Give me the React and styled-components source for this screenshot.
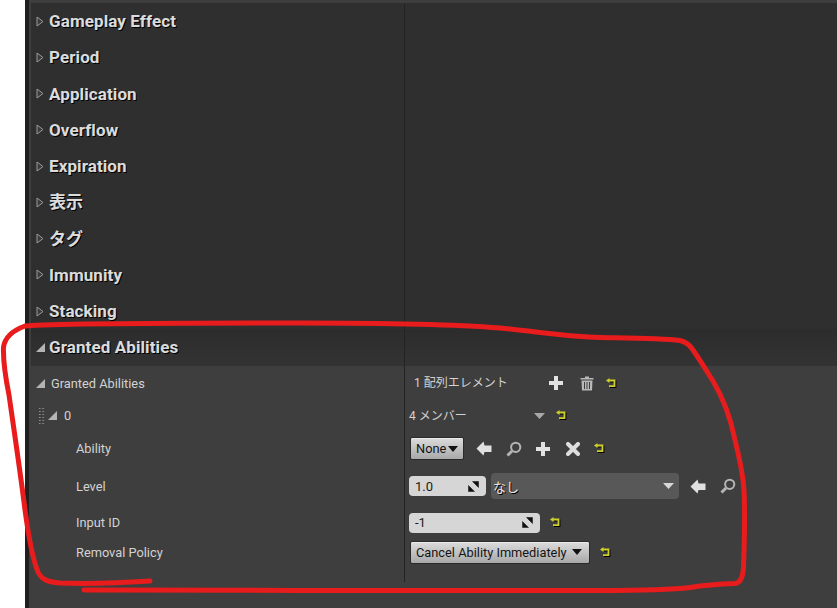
import React from 'react';
import styled, { createGlobalStyle } from 'styled-components';

const Global = createGlobalStyle`
  html, body {
    margin: 0;
    background: #fff;
  }
  body {
    font-family: Roboto, "Noto Sans CJK JP", sans-serif;
  }
`;

const Page = styled.div`
  position: relative;
  width: 837px;
  height: 608px;
  overflow: hidden;
  background: #fff;
  padding-left: 25px;
  box-sizing: border-box;
`;

const Frame = styled.div`
  width: 812px;
  height: 608px;
  box-sizing: border-box;
  border-left: 4px solid #1f1f1f;
  padding: 3px 0 26px 2px;
  background: #3e3e3e;
`;

const Row = styled.div`
  display: grid;
  grid-template-columns: 374px 1fr;
  height: ${(p) => p.$height}px;
  background: ${(p) => p.$bg || 'transparent'};
`;

const NameCell = styled.div`
  display: flex;
  align-items: center;
  padding-left: ${(p) => p.$indent || 5}px;
  border-right: 1px solid #232323;
  min-width: 0;
`;

const ValueCell = styled.div`
  display: flex;
  align-items: center;
  padding-left: ${(p) => p.$indent || 4}px;
`;

const CategoryTitle = styled.span`
  font-size: 17px;
  line-height: 20px;
  height: 20px;
  font-weight: 700;
  letter-spacing: 0.1px;
  color: #dcdcdc;
  text-shadow: 1px 1px 0 #000;
  margin-left: ${(p) => p.$gap || 5}px;
  white-space: nowrap;
`;

const Label = styled.span`
  font-size: 12.8px;
  color: #d2d2d2;
  margin-left: ${(p) => p.$gap || 0}px;
  white-space: nowrap;
`;

const ValueText = styled.span`
  font-size: 12px;
  line-height: 16px;
  height: 16px;
  color: #d2d2d2;
  white-space: nowrap;
`;

const Slot = styled.span`
  display: inline-flex;
  align-items: center;
  margin-left: ${(p) => p.$gap || 0}px;
`;

const Grip = styled.span`
  display: inline-block;
  width: 7px;
  height: 17px;
  margin-right: 3px;
  background-image: radial-gradient(circle, #8a8a8a 0.8px, transparent 1px);
  background-size: 3.5px 3px;
`;

const ComboButton = styled.div`
  display: flex;
  align-items: center;
  justify-content: space-between;
  box-sizing: border-box;
  width: ${(p) => p.$width}px;
  height: 23px;
  margin-left: 1px;
  padding: 0 ${(p) => p.$padRight}px 0 5px;
  border-radius: 2px;
  border: 1px solid #2a2a2a;
  background: linear-gradient(#dcdcdc, #a8a8a8);
  box-shadow: inset 0 1px 0 #ececec;
  font-size: 12.8px;
  color: #141414;
  white-space: nowrap;
`;

const NumberBox = styled.div`
  display: flex;
  align-items: center;
  justify-content: space-between;
  box-sizing: border-box;
  width: ${(p) => p.$width}px;
  height: 20px;
  padding: 0 7px 0 6px;
  border-radius: 4px;
  background: #d6d6d6;
  font-size: 13px;
  color: #1a1a1a;
`;

const AssetCombo = styled.div`
  display: flex;
  align-items: center;
  justify-content: space-between;
  box-sizing: border-box;
  width: 188px;
  height: 26px;
  margin-left: 5px;
  padding: 0 5px 0 2px;
  border-radius: 4px;
  background: #585858;
  font-size: 13px;
  color: #e8e8e8;
  text-shadow: 1px 1px 0 #000;
`;

const Annotation = styled.svg`
  position: absolute;
  left: 0;
  top: 0;
  pointer-events: none;
`;

const Collapsed = () => (
  <svg width="8" height="11" viewBox="0 0 8 11">
    <path d="M1 1 L7 5.5 L1 10 Z" fill="#3a3a3a" stroke="#9a9a9a" strokeWidth="1" />
  </svg>
);

const Expanded = () => (
  <svg width="9" height="9" viewBox="0 0 9 9">
    <path d="M9 0 V9 H0 Z" fill="#b4b4b4" />
  </svg>
);

const Plus = ({ color = '#e2e2e2' }) => (
  <svg width="14" height="14" viewBox="0 0 14 14">
    <path d="M5 0 H9 V5 H14 V9 H9 V14 H5 V9 H0 V5 H5 Z" fill={color} />
  </svg>
);

const Trash = () => (
  <svg width="14" height="15" viewBox="0 0 14 15">
    <path d="M0.5 2 H13.5 V3.5 H0.5 Z M5 0.5 H9 V2 H5 Z" fill="#b8b8b8" />
    <path d="M1.5 4.5 H12.5 L12 14.5 H2 Z" fill="#b8b8b8" />
    <path d="M4.5 6 V13 M7 6 V13 M9.5 6 V13" stroke="#3e3e3e" strokeWidth="1" />
  </svg>
);

const Reset = () => (
  <svg width="11" height="11" viewBox="0 0 11 11">
    <path d="M2.5 2.5 H8.5 V8.2 H3" fill="none" stroke="#000" strokeWidth="1.8" transform="translate(1 1)" />
    <path d="M3.5 0 L0 2.5 L3.5 5 Z" fill="#d0d02c" />
    <path d="M2.5 2.5 H8.5 V8.2 H3" fill="none" stroke="#d0d02c" strokeWidth="1.8" />
  </svg>
);

const Back = () => (
  <svg width="16" height="15" viewBox="0 0 16 15">
    <path d="M7.5 0.5 L0.5 7.5 L7.5 14.5 L8.5 11 H15.5 V4.5 H8.5 Z" fill="#e0e0e0" />
  </svg>
);

const Search = () => (
  <svg width="16" height="16" viewBox="0 0 16 16">
    <circle cx="9.7" cy="6.3" r="4.6" fill="none" stroke="#b4b4b4" strokeWidth="2" />
    <path d="M6 10 L1.5 14.5" stroke="#b4b4b4" strokeWidth="3" />
  </svg>
);

const Cross = () => (
  <svg width="14" height="14" viewBox="0 0 14 14">
    <path d="M2 2 L12 12 M12 2 L2 12" stroke="#dedede" strokeWidth="4" strokeLinecap="round" />
  </svg>
);

const Caret = ({ color = '#111', width = 10 }) => (
  <svg width={width} height="6" viewBox="0 0 10 6" preserveAspectRatio="none">
    <path d="M0 0 H10 L5 6 Z" fill={color} />
  </svg>
);

const Spin = () => (
  <svg width="11" height="11" viewBox="0 0 11 11">
    <path d="M4.5 0.5 H10.5 V6.5 Z M0.5 4.5 L6.5 10.5 H0.5 Z" fill="#111" stroke="#111" strokeWidth="0.5" />
  </svg>
);

const categories = ['Gameplay Effect', 'Period', 'Application', 'Overflow', 'Expiration', '表示', 'タグ', 'Immunity', 'Stacking'];

const App = () => (
  <Page>
    <Global />
    <Frame>
      {categories.map((name) => (
        <Row key={name} $height={36.25} $bg="#2f2f2f">
          <NameCell>
            <Collapsed />
            <CategoryTitle>{name}</CategoryTitle>
          </NameCell>
          <ValueCell />
        </Row>
      ))}
      <Row $height={36.25} $bg="linear-gradient(#2c2c2c, #333333)">
        <NameCell>
          <Expanded />
          <CategoryTitle $gap={4}>Granted Abilities</CategoryTitle>
        </NameCell>
        <ValueCell />
      </Row>

      <Row $height={35}>
        <NameCell>
          <Expanded />
          <Label $gap={6}>Granted Abilities</Label>
        </NameCell>
        <ValueCell $indent={9}>
          <ValueText>1 配列エレメント</ValueText>
          <Slot $gap={41}><Plus /></Slot>
          <Slot $gap={17}><Trash /></Slot>
          <Slot $gap={12}><Reset /></Slot>
        </ValueCell>
      </Row>
      <Row $height={30}>
        <NameCell $indent={7}>
          <Grip />
          <Expanded />
          <Label $gap={7}>0</Label>
        </NameCell>
        <ValueCell>
          <ValueText>4 メンバー</ValueText>
          <Slot $gap={67}><Caret color="#a8a8a8" width={11} /></Slot>
          <Slot $gap={11}><Reset /></Slot>
        </ValueCell>
      </Row>
      <Row $height={36}>
        <NameCell $indent={45}>
          <Label>Ability</Label>
        </NameCell>
        <ValueCell>
          <ComboButton $width={54} $padRight={5}>
            None
            <Caret />
          </ComboButton>
          <Slot $gap={12}><Back /></Slot>
          <Slot $gap={14}><Search /></Slot>
          <Slot $gap={14}><Plus /></Slot>
          <Slot $gap={16}><Cross /></Slot>
          <Slot $gap={14}><Reset /></Slot>
        </ValueCell>
      </Row>
      <Row $height={39}>
        <NameCell $indent={45}>
          <Label>Level</Label>
        </NameCell>
        <ValueCell>
          <NumberBox $width={77}>
            1.0
            <Spin />
          </NumberBox>
          <AssetCombo>
            なし
            <Caret color="#d8d8d8" width={11} />
          </AssetCombo>
          <Slot $gap={11}><Back /></Slot>
          <Slot $gap={14}><Search /></Slot>
        </ValueCell>
      </Row>
      <Row $height={34}>
        <NameCell $indent={45}>
          <Label>Input ID</Label>
        </NameCell>
        <ValueCell>
          <NumberBox $width={131}>
            -1
            <Spin />
          </NumberBox>
          <Slot $gap={10}><Reset /></Slot>
        </ValueCell>
      </Row>
      <Row $height={25}>
        <NameCell $indent={45}>
          <Label>Removal Policy</Label>
        </NameCell>
        <ValueCell>
          <ComboButton $width={180} $padRight={7}>
            Cancel Ability Immediately
            <Caret />
          </ComboButton>
          <Slot $gap={10}><Reset /></Slot>
        </ValueCell>
      </Row>
      <Row $height={17.5}>
        <NameCell />
        <ValueCell />
      </Row>
    </Frame>
    <Annotation width="837" height="608" viewBox="0 0 837 608">
      <path
        d="M150 581 C120 583 85 584 60 583 C48 582 42 580 38 572 C33 560 29 540 25 510 C20 470 14 430 9 395 C5 375 3 360 3.5 347 C5 337 14 330 25 326 C60 323 180 323 300 323 C380 323 450 324 500 328 C540 332 570 337 600 337.5 C630 338 660 338 680 340.5 C686 342 690 345 693 350 C700 360 706 370 713 381 C722 396 730 415 735 440 C740 460 743 475 744 490 C745 510 744.5 540 743.5 567 C743 578 740 583 735 583.5 C720 584 705 585 690 587.5 C670 590 640 590.5 600 590.5 C450 590.5 250 590.5 84 590"
        fill="none"
        stroke="#e81c1c"
        strokeWidth="5"
        strokeLinecap="round"
      />
    </Annotation>
  </Page>
);

export default App;
